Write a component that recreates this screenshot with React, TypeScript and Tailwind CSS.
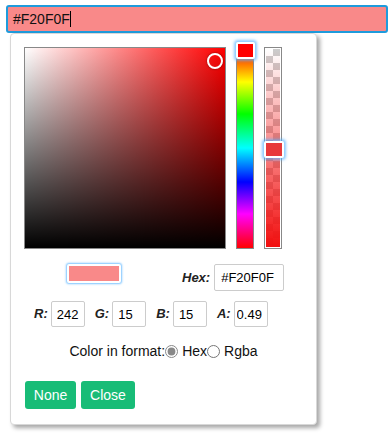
import { useState } from "react";

const font = "font-['Liberation_Sans',Arial,sans-serif]";

function ChannelField({ label, value, tight }: { label: string; value: string; tight?: boolean }) {
    return (
        <div className="flex items-center gap-[3px]">
            <span className="text-[13px] font-bold italic text-[#222]">{label}</span>
            <input
                readOnly
                value={value}
                className={`w-[34px] h-[26px] border border-[#ccc] rounded-[2px] pr-0 text-[13px] text-black outline-none ${tight ? "pl-[2px]" : "pl-[5px]"}`}
            />
        </div>
    );
}

function App() {
    const [format, setFormat] = useState<"hex" | "rgba">("hex");

    return (
        <div className={`${font} w-[392px] h-[434px] bg-white pt-[5px] overflow-hidden`}>
            <div className="ml-[6px] w-[382px] h-[28px] border-2 border-[#1e9bdc] rounded-[3px] bg-[#f98989] flex items-center px-[5px] text-[14px] text-[#111]">
                #F20F0F<span className="w-px h-[16px] bg-black" />
            </div>

            <div className="ml-[10px] w-[307px] bg-white border border-[#d8d8d8] rounded-[4px] shadow-[3px_3px_4px_rgba(0,0,0,0.35)] pt-[13px] pl-[13px] pb-[15px]">
                <div className="flex gap-[10px]">
                    <div className="relative w-[202px] h-[202px] border border-[#888] bg-[linear-gradient(to_top,#000,transparent),linear-gradient(to_right,#fff,#f00)]">
                        <div className="absolute left-[182px] top-[5px] w-[16px] h-[16px] rounded-full border-2 border-white shadow-[0_0_2px_rgba(0,0,0,0.6)]" />
                    </div>

                    <div className="relative w-[18px] h-[202px] border border-[#888] bg-[linear-gradient(to_bottom,#f00,#ff0_17%,#0f0_33%,#0ff_50%,#00f_67%,#f0f_83%,#f00)]">
                        <div className="absolute -left-px -top-[6px] w-[19px] h-[17px] bg-white rounded-[2px] shadow-[0_0_3px_2px_rgba(90,180,255,0.7)] p-[2px]">
                            <div className="w-full h-full bg-[#f00]" />
                        </div>
                    </div>

                    <div className="relative w-[18px] h-[202px] border border-[#888] bg-white">
                        <div className="absolute inset-[1px] bg-[repeating-conic-gradient(#ccc_0_25%,#fff_0_50%)] bg-size-[14px_14px]" />
                        <div className="absolute inset-[1px] bg-[linear-gradient(to_bottom,rgba(242,15,15,0),rgba(242,15,15,1))]" />
                        <div className="absolute -left-px top-[93px] w-[20px] h-[17px] bg-white rounded-[2px] shadow-[0_0_3px_2px_rgba(90,180,255,0.7)] p-[2px]">
                            <div className="w-full h-full bg-[#e8383a]" />
                        </div>
                    </div>
                </div>

                <div className="flex items-start mt-[15px]">
                    <div className="ml-[43px] w-[54px] h-[19px] bg-[#f98989] border-2 border-white rounded-[2px] shadow-[0_0_2px_1px_rgba(90,180,255,0.8)]" />
                    <div className="ml-[61px] flex items-center gap-[4px]">
                        <span className="text-[13px] font-bold italic text-[#222]">Hex:</span>
                        <input
                            readOnly
                            value="#F20F0F"
                            className="w-[70px] h-[27px] border border-[#ccc] rounded-[2px] px-[6px] text-[13px] text-black outline-none"
                        />
                    </div>
                </div>

                <div className="flex items-center gap-[10px] mt-[10px] ml-[10px]">
                    <ChannelField label="R:" value="242" />
                    <ChannelField label="G:" value="15" />
                    <ChannelField label="B:" value="15" />
                    <ChannelField label="A:" value="0.49" tight />
                </div>

                <div className="flex items-center justify-center mt-[14px] pr-[13px] text-[14px] text-[#111]">
                    <span>Color in format:</span>
                    <input
                        type="radio"
                        name="fmt"
                        checked={format === "hex"}
                        onChange={() => setFormat("hex")}
                        className="w-[13px] h-[13px] m-0 mr-[4px] accent-[#888]"
                    />
                    <span>Hex</span>
                    <input
                        type="radio"
                        name="fmt"
                        checked={format === "rgba"}
                        onChange={() => setFormat("rgba")}
                        className="w-[13px] h-[13px] m-0 mr-[4px]"
                    />
                    <span>Rgba</span>
                </div>

                <div className="flex gap-[5px] mt-[19px] ml-[1px]">
                    <button className="h-[28px] w-[51px] rounded-[3px] bg-[#18bc77] text-white text-[14px]">None</button>
                    <button className="h-[28px] w-[54px] rounded-[3px] bg-[#18bc77] text-white text-[14px]">Close</button>
                </div>
            </div>
        </div>
    );
}

export default App;
